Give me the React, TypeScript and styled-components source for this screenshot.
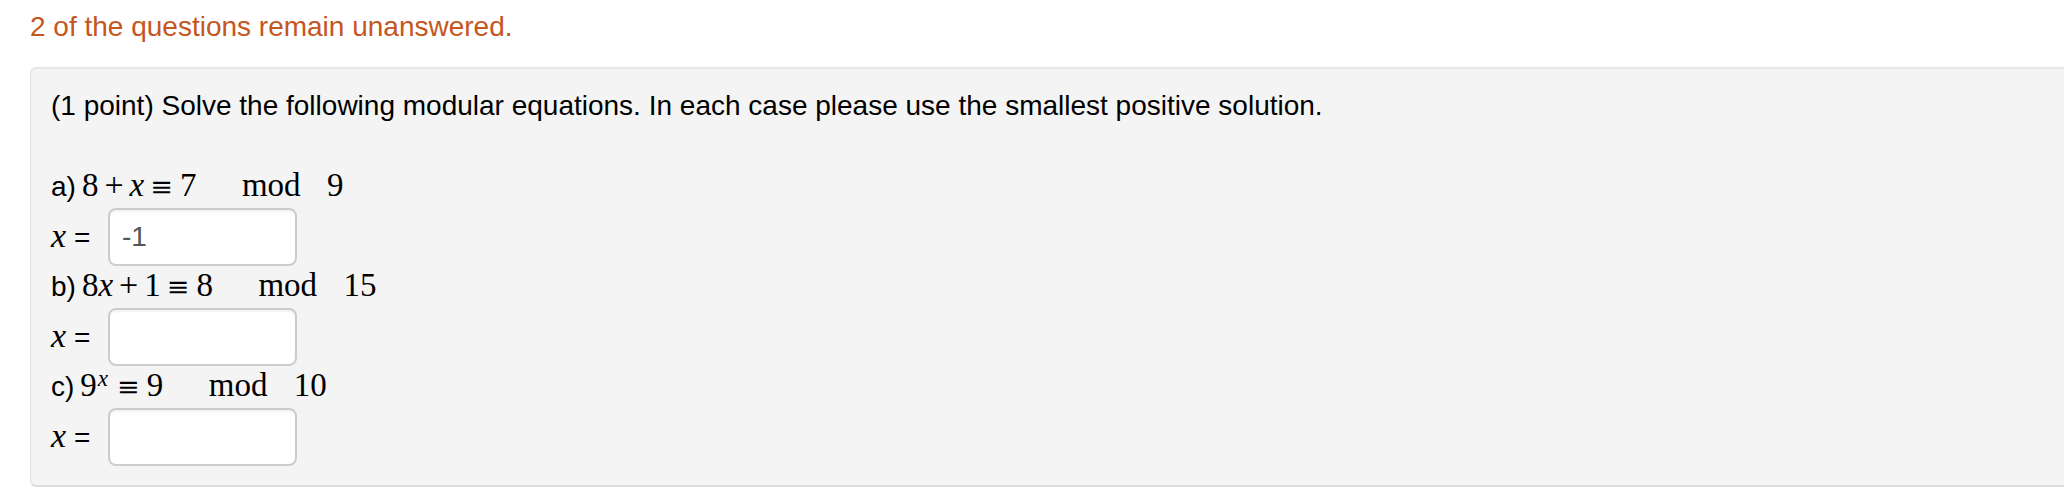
import React from "react";
import styled, { createGlobalStyle } from "styled-components";

const GlobalStyle = createGlobalStyle`
  html, body {
    margin: 0;
    padding: 0;
    background: #ffffff;
    overflow: hidden;
  }
  body {
    font-family: "Liberation Sans", Arial, Helvetica, sans-serif;
    color: #000;
  }
`;

const Page = styled.div`
  padding: 7px 0 0 30px;
`;

const Notice = styled.div`
  color: #c4561e;
  font-size: 28px;
  line-height: 40px;
`;

const Panel = styled.div`
  margin-top: 20px;
  margin-right: -12px;
  background: #f4f4f4;
  border: 1px solid #e3e3e3;
  border-bottom: 2px solid #dddddd;
  border-radius: 6px;
  box-shadow: inset 0 1px 2px rgba(0, 0, 0, 0.06);
  padding: 18px 20px 18px 20px;
  font-size: 28px;
  line-height: 40px;
`;

const Intro = styled.p`
  margin: 0 0 41px 0;
`;

const Question = styled.div`
  display: flex;
  flex-direction: column;
`;

const EqLine = styled.div`
  height: 40px;
  line-height: 40px;
  white-space: nowrap;
`;

const Math = styled.span`
  font-family: "Liberation Serif", "Times New Roman", serif;
  font-size: 33px;
  line-height: 1;
  margin-left: 6px;
`;

const Mi = styled.span`
  font-style: italic;
`;

const Mo = styled.span`
  font-family: "Liberation Serif", "Times New Roman", serif;
  font-size: 34px;
  line-height: 0;
  margin: 0 6px;
`;

const Rel = styled.span`
  font-family: "DejaVu Serif", "Liberation Serif", serif;
  font-weight: 300;
  font-size: 27px;
  line-height: 0;
  margin: 0 7px 0 6px;
`;

const Mod = styled.span`
  margin-left: 1.38em;
  margin-right: 0.8em;
`;

const Sup = styled.sup`
  font-size: 0.7em;
  font-style: italic;
  vertical-align: 0.45em;
  line-height: 0;
  margin-left: 1px;
  margin-right: 3px;
`;

const InputRow = styled.div`
  height: 60px;
  display: flex;
  align-items: center;
`;

const VarLabel = styled.span`
  display: inline-flex;
  align-items: baseline;
  width: 57px;
  gap: 8px;
`;

const LabelX = styled.span`
  font-family: "Liberation Serif", "Times New Roman", serif;
  font-style: italic;
  font-size: 34px;
`;

const AnswerBox = styled.input`
  box-sizing: border-box;
  width: 189px;
  height: 58px;
  border: 2px solid #cccccc;
  border-radius: 8px;
  background: #ffffff;
  box-shadow: inset 0 2px 2px rgba(0, 0, 0, 0.05);
  padding: 0 12px;
  font-family: "Liberation Sans", Arial, Helvetica, sans-serif;
  font-size: 28px;
  color: #555555;
  outline: none;
`;

const Answer: React.FC<{ value?: string }> = ({ value }) => (
  <InputRow>
    <VarLabel>
      <LabelX>x</LabelX>
      <span>=</span>
    </VarLabel>
    <AnswerBox type="text" defaultValue={value ?? ""} />
  </InputRow>
);

export default function App() {
  return (
    <>
      <GlobalStyle />
      <Page>
        <Notice>2 of the questions remain unanswered.</Notice>
        <Panel>
          <Intro>
            (1 point) Solve the following modular equations. In each case please use the smallest positive solution.
          </Intro>

          <Question>
            <EqLine>
              a)
              <Math>
                8<Mo>+</Mo>
                <Mi>x</Mi>
                <Rel>≡</Rel>7<Mod>mod</Mod>9
              </Math>
            </EqLine>
            <Answer value="-1" />
          </Question>

          <Question>
            <EqLine>
              b)
              <Math>
                8<Mi>x</Mi>
                <Mo>+</Mo>1<Rel>≡</Rel>8<Mod>mod</Mod>15
              </Math>
            </EqLine>
            <Answer />
          </Question>

          <Question>
            <EqLine>
              c)
              <Math>
                9<Sup>x</Sup>
                <Rel>≡</Rel>9<Mod>mod</Mod>10
              </Math>
            </EqLine>
            <Answer />
          </Question>
        </Panel>
      </Page>
    </>
  );
}
